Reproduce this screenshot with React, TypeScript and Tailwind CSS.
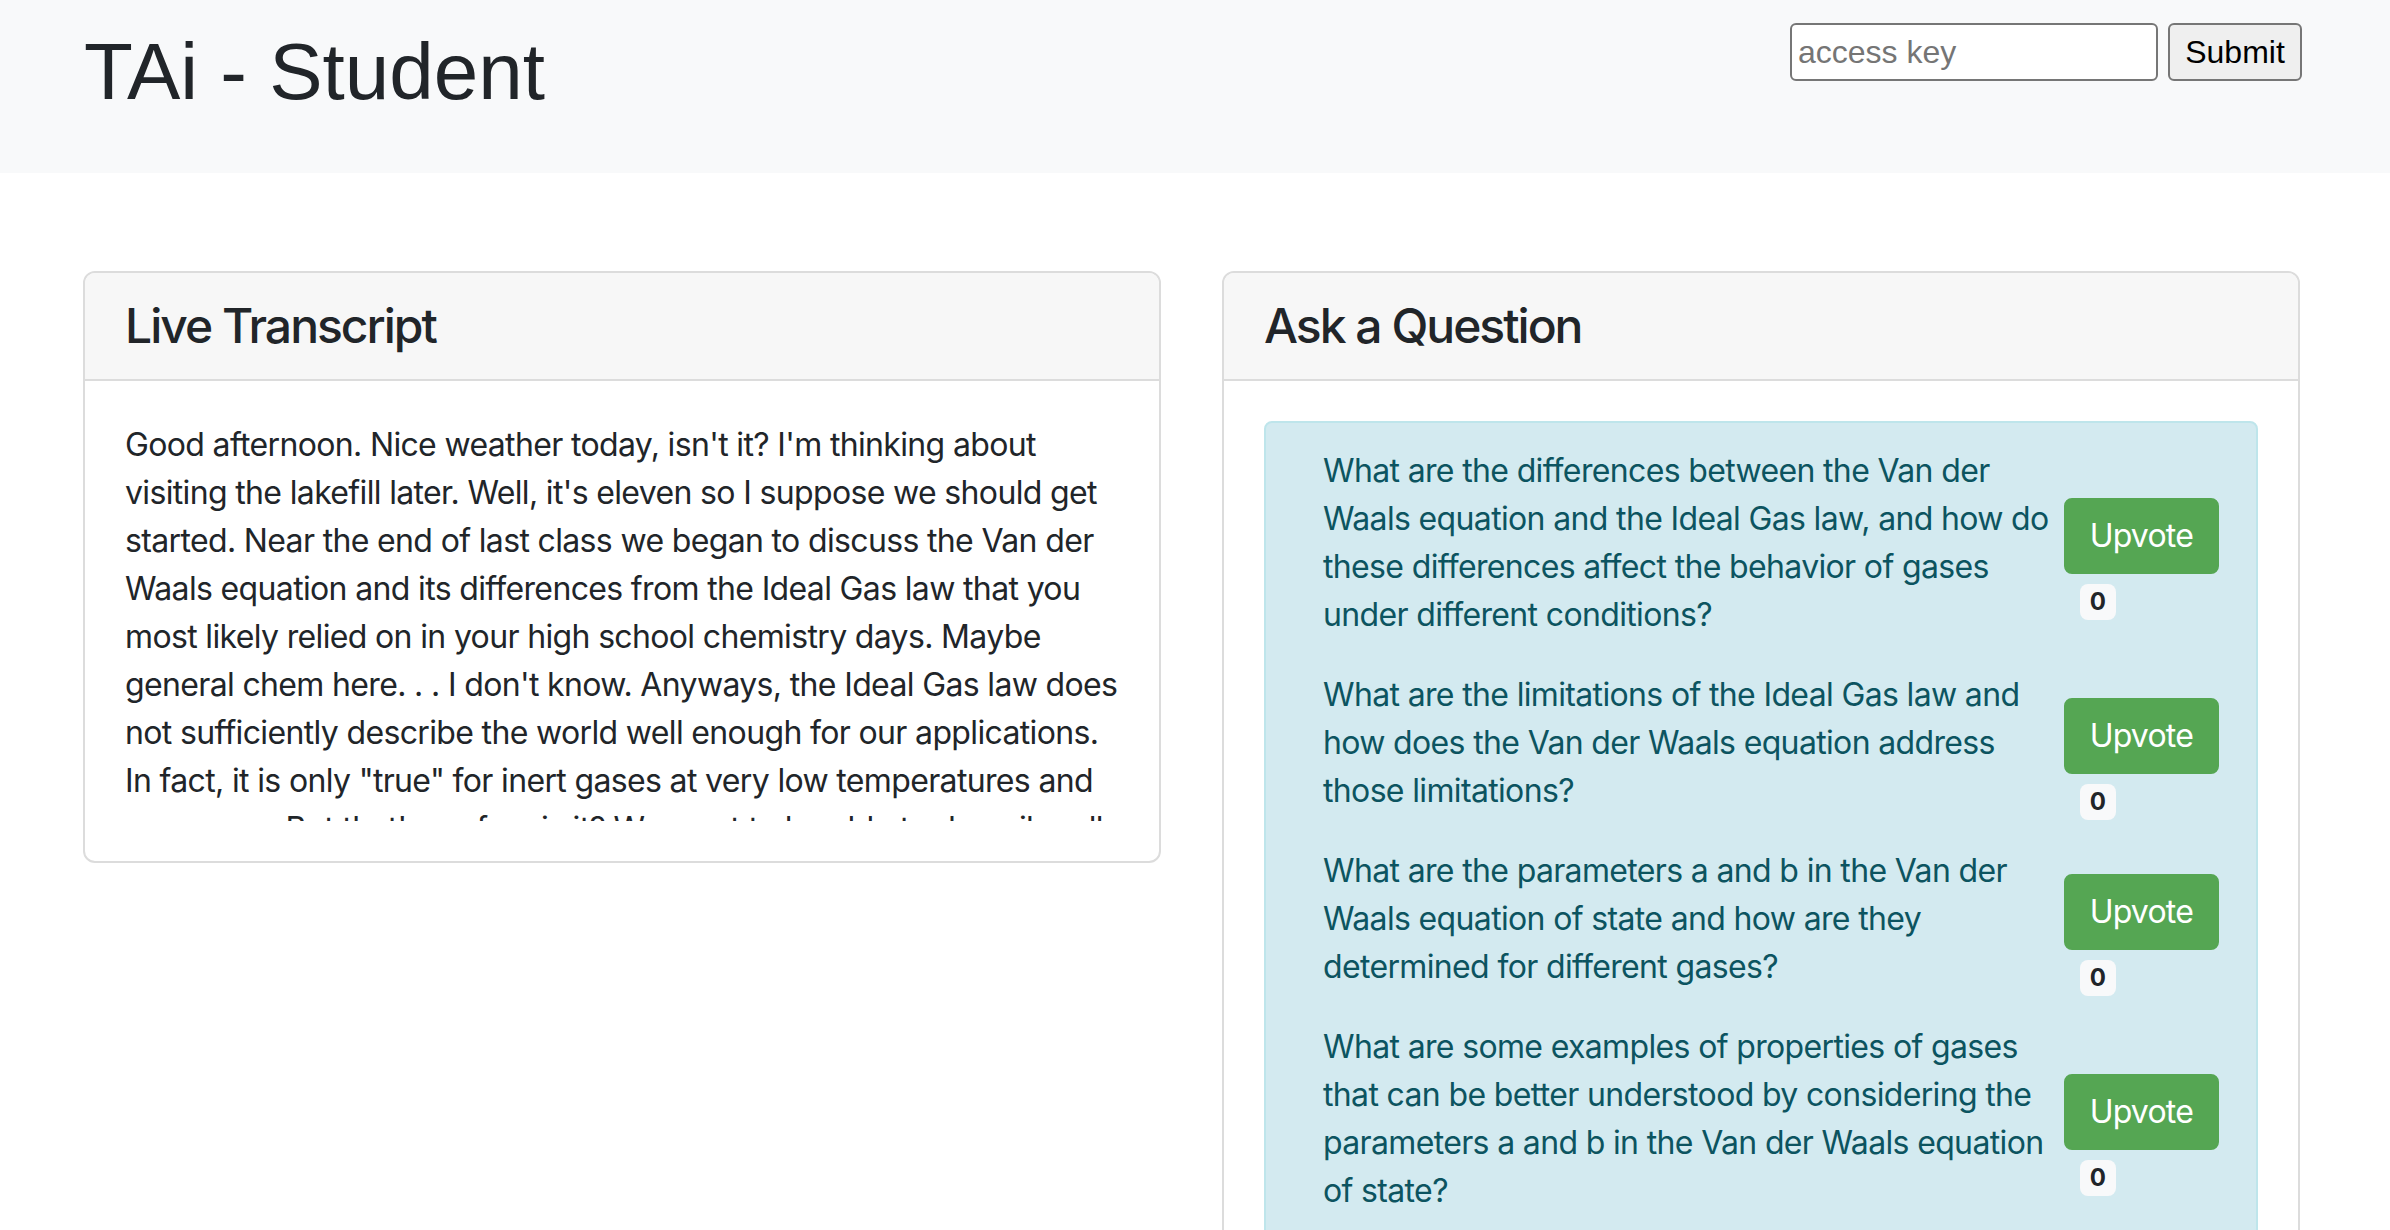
const transcript =
  "Good afternoon. Nice weather today, isn't it? I'm thinking about visiting the lakefill later. Well, it's eleven so I suppose we should get started. Near the end of last class we began to discuss the Van der Waals equation and its differences from the Ideal Gas law that you most likely relied on in your high school chemistry days. Maybe general chem here. . . I don't know. Anyways, the Ideal Gas law does not sufficiently describe the world well enough for our applications. In fact, it is only \"true\" for inert gases at very low temperatures and pressures. But that's no fun, is it? We want to be able to describe all sorts of gases under all sorts of conditions, and that is where Van der Waals comes in.";

const questions = [
  {
    id: 1,
    text: "What are the differences between the Van der Waals equation and the Ideal Gas law, and how do these differences affect the behavior of gases under different conditions?",
    votes: 0,
  },
  {
    id: 2,
    text: "What are the limitations of the Ideal Gas law and how does the Van der Waals equation address those limitations?",
    votes: 0,
  },
  {
    id: 3,
    text: "What are the parameters a and b in the Van der Waals equation of state and how are they determined for different gases?",
    votes: 0,
  },
  {
    id: 4,
    text: "What are some examples of properties of gases that can be better understood by considering the parameters a and b in the Van der Waals equation of state?",
    votes: 0,
  },
  {
    id: 5,
    text: "How does the Van der Waals equation account for the volume of gas molecules and the attractive forces between them?",
    votes: 0,
  },
];

function Card({ title, children }: { title: string; children: React.ReactNode }) {
  return (
    <div className="border-2 border-[#dcdcdc] rounded-[12px] overflow-hidden bg-white">
      <div className="bg-[#f7f7f7] border-b-2 border-[#dcdcdc] px-[40px] py-[24px]">
        <h4 className="text-[48px] leading-[1.2] font-medium tracking-[-2px]">{title}</h4>
      </div>
      <div className="p-[40px]">{children}</div>
    </div>
  );
}

export default function App() {
  return (
    <div className="min-h-screen bg-white text-[#212529] font-['Inter',sans-serif]">
      <header className="h-[173px] bg-[#f8f9fa] flex justify-between items-start pl-[84px] pr-[88px]">
        <h1 className="mt-[24px] font-['Liberation_Sans',Arial,sans-serif] text-[80px] leading-[1.2]">
          TAi - Student
        </h1>
        <form className="mt-[23px] flex gap-[10px] font-['Liberation_Sans',Arial,sans-serif]" onSubmit={(e) => e.preventDefault()}>
          <input
            type="text"
            placeholder="access key"
            className="w-[368px] h-[58px] bg-white border-2 border-[#767676] rounded-[6px] px-[6px] text-[32px] placeholder:text-[#757575] outline-none"
          />
          <button className="w-[134px] h-[58px] bg-[#efefef] border-2 border-[#767676] rounded-[6px] text-[32px] text-black">
            Submit
          </button>
        </form>
      </header>

      <main className="mt-[98px] grid grid-cols-2 gap-[61px] pl-[83px] pr-[90px] items-start">
        <Card title="Live Transcript">
          <div className="h-[400px] overflow-hidden text-[32px] leading-[48px] tracking-[-0.65px]">{transcript}</div>
        </Card>

        <Card title="Ask a Question">
          <div className="border-2 border-[#bee5eb] bg-[#d3eaf0] rounded-[8px] pl-[40px] pr-[37px] py-[24px] text-[#0c5460]">
            {questions.map((q) => (
              <div key={q.id} className="flex items-center gap-[8px]">
                <p className="flex-1 ml-[17px] mb-[32px] text-[32px] leading-[48px] tracking-[-0.65px]">{q.text}</p>
                <div className="flex flex-col">
                  <button className="bg-[#55a653] border-2 border-[#55a653] text-white rounded-[8px] px-[24px] py-[12px] text-[32px] leading-[48px] tracking-[-0.8px]">
                    Upvote
                  </button>
                  <span className="self-start mt-[10px] ml-[16px] bg-[#f8f9fa] text-[#212529] rounded-[8px] px-[10px] py-[6px] text-[24px] leading-none font-bold">
                    {q.votes}
                  </span>
                </div>
              </div>
            ))}
          </div>
        </Card>
      </main>
    </div>
  );
}
